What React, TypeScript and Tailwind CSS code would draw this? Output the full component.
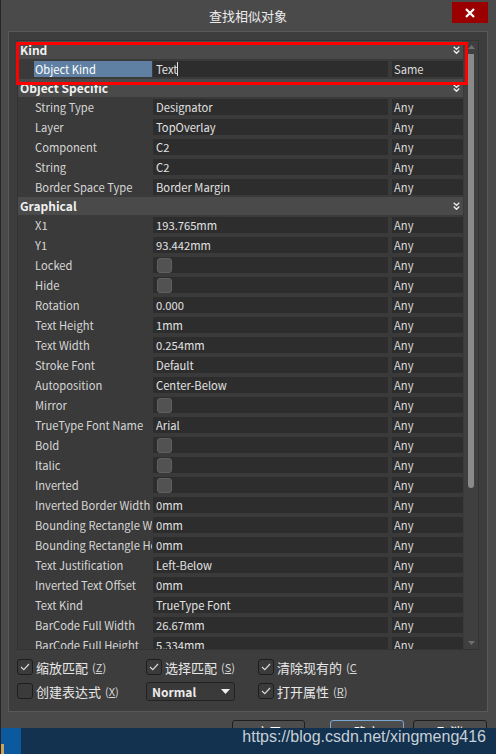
import { Fragment } from 'react'

type Row = { label: string; value?: string; check?: boolean }

const OBJECT_SPECIFIC: Row[] = [
  { label: 'String Type', value: 'Designator' },
  { label: 'Layer', value: 'TopOverlay' },
  { label: 'Component', value: 'C2' },
  { label: 'String', value: 'C2' },
  { label: 'Border Space Type', value: 'Border Margin' },
]

const GRAPHICAL: Row[] = [
  { label: 'X1', value: '193.765mm' },
  { label: 'Y1', value: '93.442mm' },
  { label: 'Locked', check: true },
  { label: 'Hide', check: true },
  { label: 'Rotation', value: '0.000' },
  { label: 'Text Height', value: '1mm' },
  { label: 'Text Width', value: '0.254mm' },
  { label: 'Stroke Font', value: 'Default' },
  { label: 'Autoposition', value: 'Center-Below' },
  { label: 'Mirror', check: true },
  { label: 'TrueType Font Name', value: 'Arial' },
  { label: 'Bold', check: true },
  { label: 'Italic', check: true },
  { label: 'Inverted', check: true },
  { label: 'Inverted Border Width', value: '0mm' },
  { label: 'Bounding Rectangle Width', value: '0mm' },
  { label: 'Bounding Rectangle Height', value: '0mm' },
  { label: 'Text Justification', value: 'Left-Below' },
  { label: 'Inverted Text Offset', value: '0mm' },
  { label: 'Text Kind', value: 'TrueType Font' },
  { label: 'BarCode Full Width', value: '26.67mm' },
  { label: 'BarCode Full Height', value: '5.334mm' },
]

function Chevrons() {
  return (
    <svg width="7" height="8" viewBox="0 0 7 8">
      <path d="M0.7 0.7 3.5 3.4 6.3 0.7M0.7 4.6 3.5 7.3 6.3 4.6" stroke="#ececec" strokeWidth="1.4" fill="none" />
    </svg>
  )
}

function SectionHeader({ title }: { title: string }) {
  return (
    <div className="flex h-[18px] shrink-0 items-center justify-between bg-[#4a4a4a] pl-[2px] pr-[3px]">
      <span className="text-[12px] font-bold leading-none text-[#f0f0f0]">{title}</span>
      <Chevrons />
    </div>
  )
}

function PropRow({ row, match = 'Any', selected = false, cursor = false }: { row: Row; match?: string; selected?: boolean; cursor?: boolean }) {
  return (
    <div className="flex h-5 shrink-0 py-[2px] pl-4 text-[11.2px] leading-4">
      <div className={`w-[118px] overflow-hidden whitespace-nowrap pl-[1px] ${selected ? 'bg-[#5f80a2] text-white' : 'text-[#d6d6d6]'}`}>
        {row.label}
      </div>
      <div className="ml-px flex w-[235px] items-center bg-[#2d2d2d] pl-[3px] text-[#e2e2e2]">
        {row.check ? (
          <span className="ml-px h-[15px] w-[15px] rounded-[3px] border border-[#5f5f5f] bg-[#525252]" />
        ) : (
          <>
            {row.value}
            {cursor && <span className="h-[14px] w-px bg-[#e0e0e0]" />}
          </>
        )}
      </div>
      <div className="ml-1 w-[71px] bg-[#2d2d2d] pl-[2px] text-[#dcdcdc]">{match}</div>
    </div>
  )
}

function Scrollbar() {
  return (
    <div className="flex w-[14px] flex-col items-center bg-[#3f3f3f] pt-[4px]">
      <svg width="7" height="4" viewBox="0 0 7 4">
        <path d="M0 4 3.5 0 7 4Z" fill="#6f6f6f" />
      </svg>
      <div className="mt-[5px] h-[434px] w-[6px] rounded-b-[3px] bg-[#8a8a8a]" />
      <div className="flex-1" />
      <svg width="7" height="4" viewBox="0 0 7 4" className="mb-[4px]">
        <path d="M0 0 3.5 4 7 0Z" fill="#6f6f6f" />
      </svg>
    </div>
  )
}

function Tick() {
  return (
    <svg width="10" height="8" viewBox="0 0 10 8">
      <path d="M1 4 3.8 6.6 9 1" stroke="#d8d8d8" strokeWidth="1.2" fill="none" />
    </svg>
  )
}

function Check({ checked, label, hotkey, cut = false }: { checked: boolean; label: string; hotkey: string; cut?: boolean }) {
  return (
    <div className="flex h-4 items-center">
      <span className="flex h-4 w-4 items-center justify-center rounded-[3px] border border-[#1e1e1e] bg-[#3b3b3b]">
        {checked && <Tick />}
      </span>
      <span className="ml-[3px] text-[13px] leading-none text-[#e8e8e8]">{label}</span>
      <span className="ml-[4px] text-[11px] leading-none text-[#d8d8d8]">
        (<span className="underline">{hotkey}</span>
        {cut ? '' : ')'}
      </span>
    </div>
  )
}

export default function App() {
  return (
    <div className="relative flex h-[754px] w-[496px] flex-col overflow-hidden border-l border-[#262626] bg-[#4a4a4a] font-['Noto_Sans_CJK_SC',sans-serif]">
      {/* title bar */}
      <div className="grid h-[31px] shrink-0 grid-cols-[43px_1fr_44px] items-center">
        <div />
        <div className="text-center text-[13px] text-[#ebebeb]">查找相似对象</div>
        <div className="flex h-full items-start">
          <div className="mt-[2px] flex h-[21px] w-[36px] items-center justify-center bg-[#9b0000]">
            <svg width="10" height="10" viewBox="0 0 10 10">
              <path d="M1 1 9 9M9 1 1 9" stroke="#fff" strokeWidth="2.2" />
            </svg>
          </div>
        </div>
      </div>

      {/* main panel */}
      <div className="ml-[7px] mr-[8px] flex h-[681px] shrink-0 flex-col border border-[#585858] bg-[#3d3d3d] pl-[8px] pr-[8px] pt-[8px]">
        <div className="flex h-[610px] shrink-0 border border-[#333] bg-[#3a3a3a]">
          <div className="flex w-[445px] flex-col overflow-hidden">
            <SectionHeader title="Kind" />
            <PropRow row={{ label: 'Object Kind', value: 'Text' }} match="Same" selected cursor />
            <SectionHeader title="Object Specific" />
            {OBJECT_SPECIFIC.map(r => (
              <PropRow key={r.label} row={r} />
            ))}
            <SectionHeader title="Graphical" />
            {GRAPHICAL.map(r => (
              <PropRow key={r.label} row={r} />
            ))}
          </div>
          <div className="w-px bg-[#3a3a3a]" />
          <Scrollbar />
        </div>

        {/* options */}
        <div className="mt-[9px] grid grid-cols-[129px_112px_1fr] gap-y-[8px]">
          <Check checked label="缩放匹配" hotkey="Z" />
          <Check checked label="选择匹配" hotkey="S" />
          <Check checked label="清除现有的" hotkey="C" cut />
          <div className="flex h-4 items-center">
            <Check checked={false} label="创建表达式" hotkey="X" />
          </div>
          <div className="-mt-[1px] flex h-[19px] w-[89px] items-center justify-between rounded-[3px] border border-[#222] bg-[#3a3a3a] pl-[5px] pr-[4px]">
            <span className="text-[12px] font-bold leading-none text-[#ececec]">Normal</span>
            <svg width="9" height="5" viewBox="0 0 9 5">
              <path d="M0 0 9 0 4.5 5Z" fill="#f0f0f0" />
            </svg>
          </div>
          <Check checked label="打开属性" hotkey="R" />
        </div>
      </div>

      {/* buttons, cut off by the taskbar */}
      <div className="mt-[8px] flex h-[8px] shrink-0 justify-end overflow-hidden pr-[9px]">
        {[
          { t: '应用', w: 'w-[73px] mr-[25px] border-[#1e1e1e]' },
          { t: '确定', w: 'w-[74px] mr-[9px] border-[#7aa7d6]' },
          { t: '取消', w: 'w-[74px] border-[#1e1e1e]' },
        ].map(b => (
          <Fragment key={b.t}>
            <div className={`flex h-[24px] shrink-0 items-center justify-center rounded-[3px] border bg-[#4d4d4d] text-[13px] text-white ${b.w}`}>
              {b.t}
            </div>
          </Fragment>
        ))}
      </div>

      {/* taskbar */}
      <div className="flex h-[26px] shrink-0 bg-[#12324f]">
        <div className="flex w-[20px] items-end bg-[#0b5aa0]">
          <div className="h-[10px] w-[3px] bg-[#c9a560]" />
        </div>
        <div className="flex flex-1 justify-end pr-[10px]">
          <span className="font-['Liberation_Sans',Arial,sans-serif] text-[16px] leading-[18px] text-[#c8cfd6]">
            https://blog.csdn.net/xingmeng416
          </span>
        </div>
      </div>

      {/* red annotation box */}
      <div className="absolute left-[15px] top-[42px] h-[43px] w-[452px] border-[3px] border-[#ff0000]" />
    </div>
  )
}
